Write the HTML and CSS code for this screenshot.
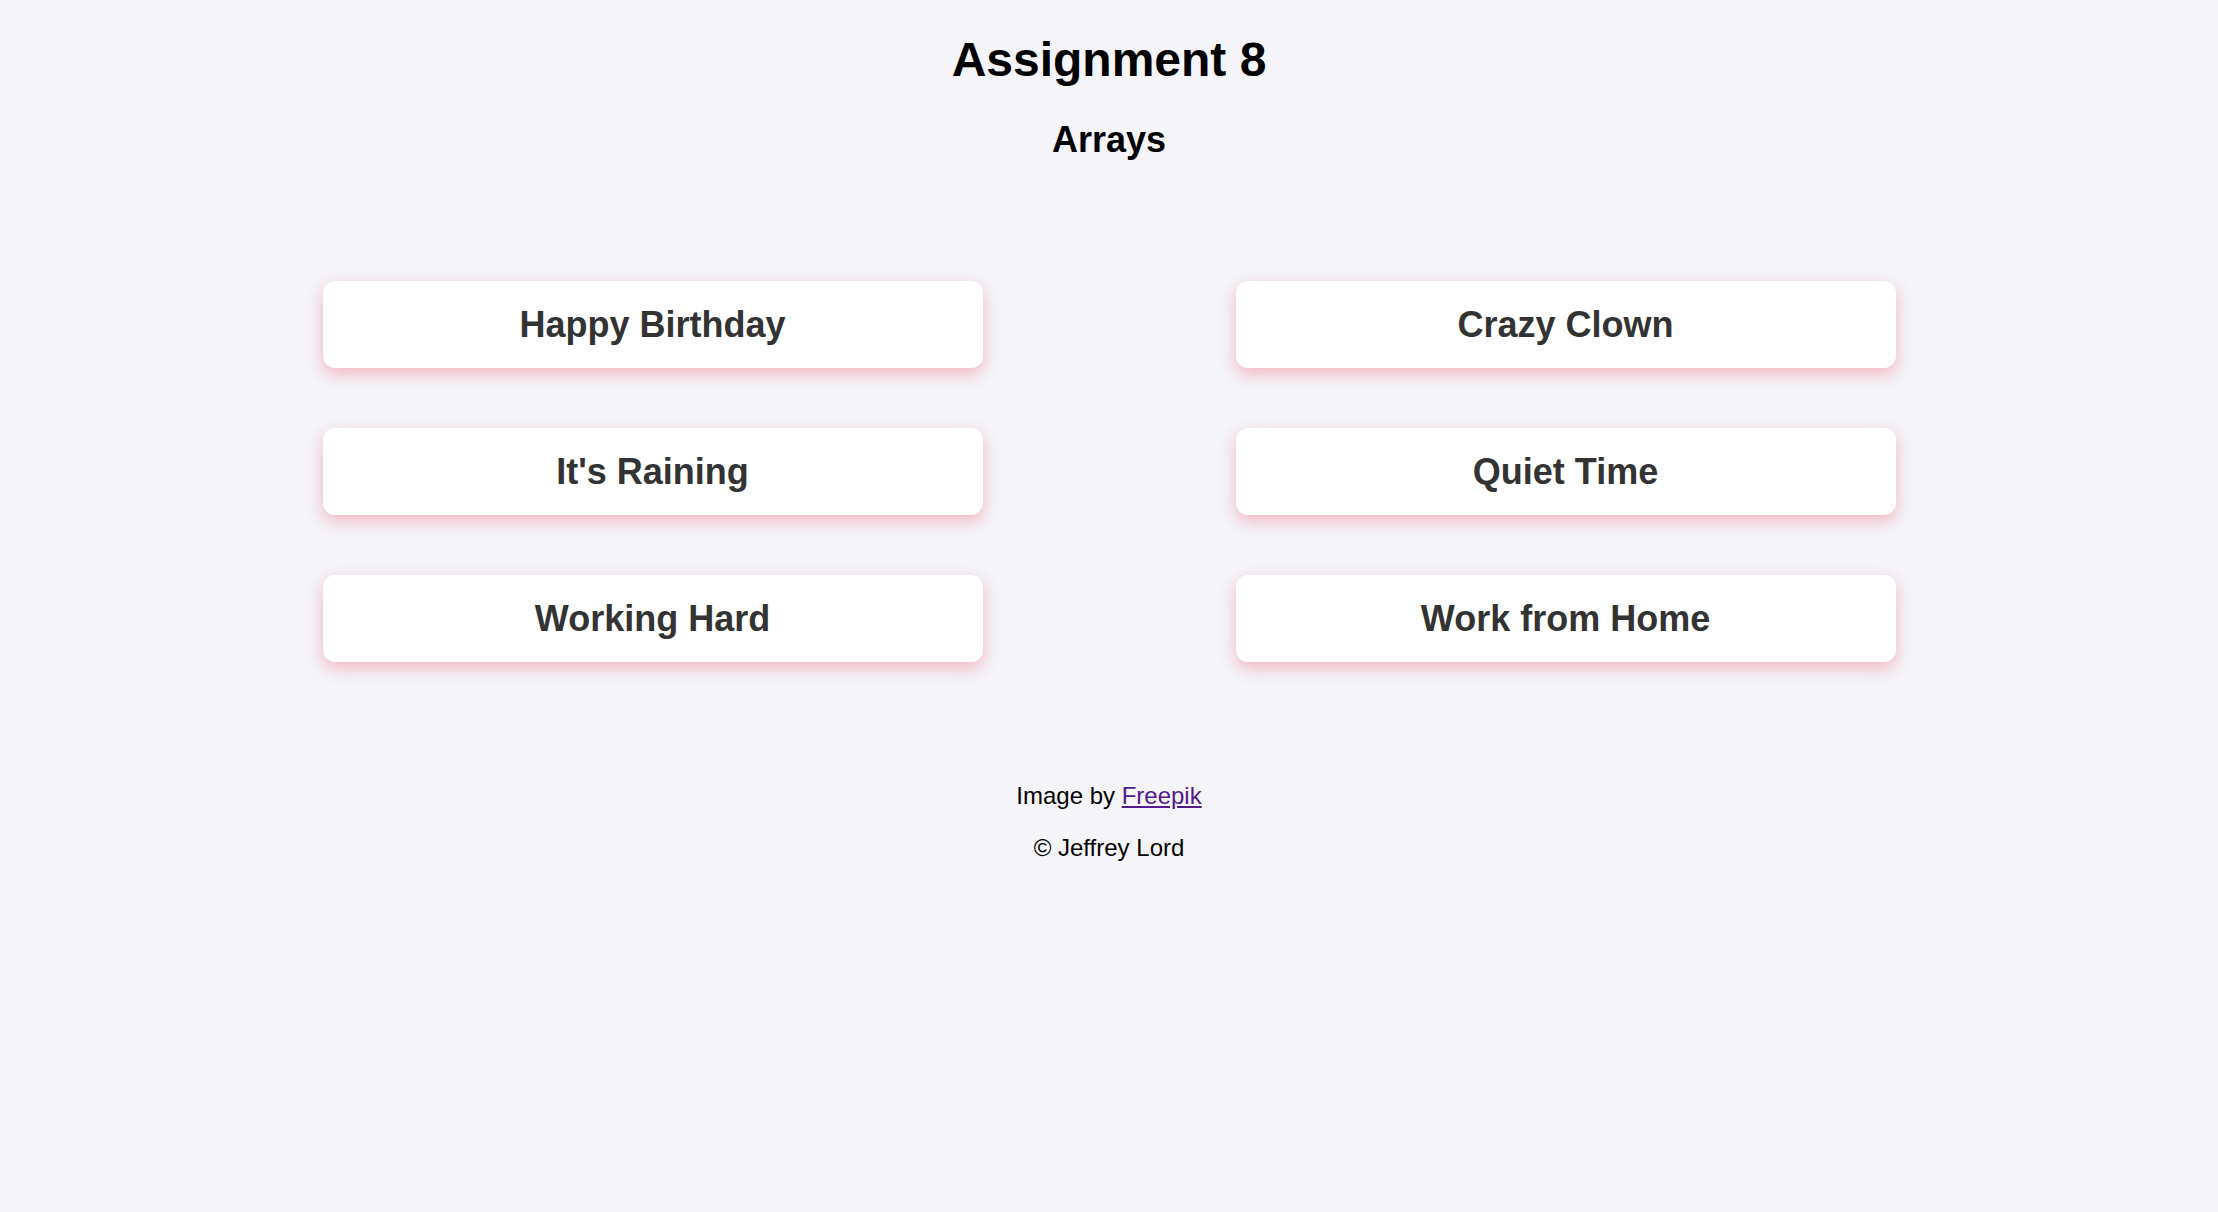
FILE: index.html
```html
<!DOCTYPE html>
<html lang="en">
<head>
<meta charset="utf-8">
<title>Assignment 8</title>
<link rel="stylesheet" href="styles.css">
</head>
<body>
<header class="header">
  <h1 class="title">Assignment 8</h1>
  <h2 class="subtitle">Arrays</h2>
</header>
<main class="grid">
  <div class="card">Happy Birthday</div>
  <div class="card">Crazy Clown</div>
  <div class="card">It's Raining</div>
  <div class="card">Quiet Time</div>
  <div class="card">Working Hard</div>
  <div class="card">Work from Home</div>
</main>
<footer class="footer">
  <p class="line">Image by <a class="link" href="#">Freepik</a></p>
  <p class="line">&copy; Jeffrey Lord</p>
</footer>
</body>
</html>
```
FILE: styles.css
```css
html, body {
  margin: 0;
  padding: 0;
}
body {
  background: #f4f4f9;
  font-family: "Liberation Sans", Arial, sans-serif;
  color: #000;
}
.header {
  text-align: center;
  padding-top: 32px;
}
.title {
  margin: 0;
  font-size: 48px;
  font-weight: bold;
  line-height: 55px;
}
.subtitle {
  margin: 32px 0 0;
  font-size: 36px;
  font-weight: bold;
  line-height: 42px;
}
.grid {
  display: grid;
  grid-template-columns: 660px 660px;
  column-gap: 253px;
  row-gap: 60px;
  justify-content: center;
  margin-top: 120px;
}
.card {
  height: 87px;
  background: #fff;
  border-radius: 12px;
  box-shadow: 0 6px 16px rgba(240, 40, 60, 0.3);
  display: flex;
  align-items: center;
  justify-content: center;
  font-size: 36px;
  font-weight: bold;
  color: #333;
}
.footer {
  text-align: center;
  padding-top: 96px;
}
.line {
  margin: 24px 0;
  font-size: 24px;
  line-height: 28px;
}
.link {
  color: #551a8b;
}
```
